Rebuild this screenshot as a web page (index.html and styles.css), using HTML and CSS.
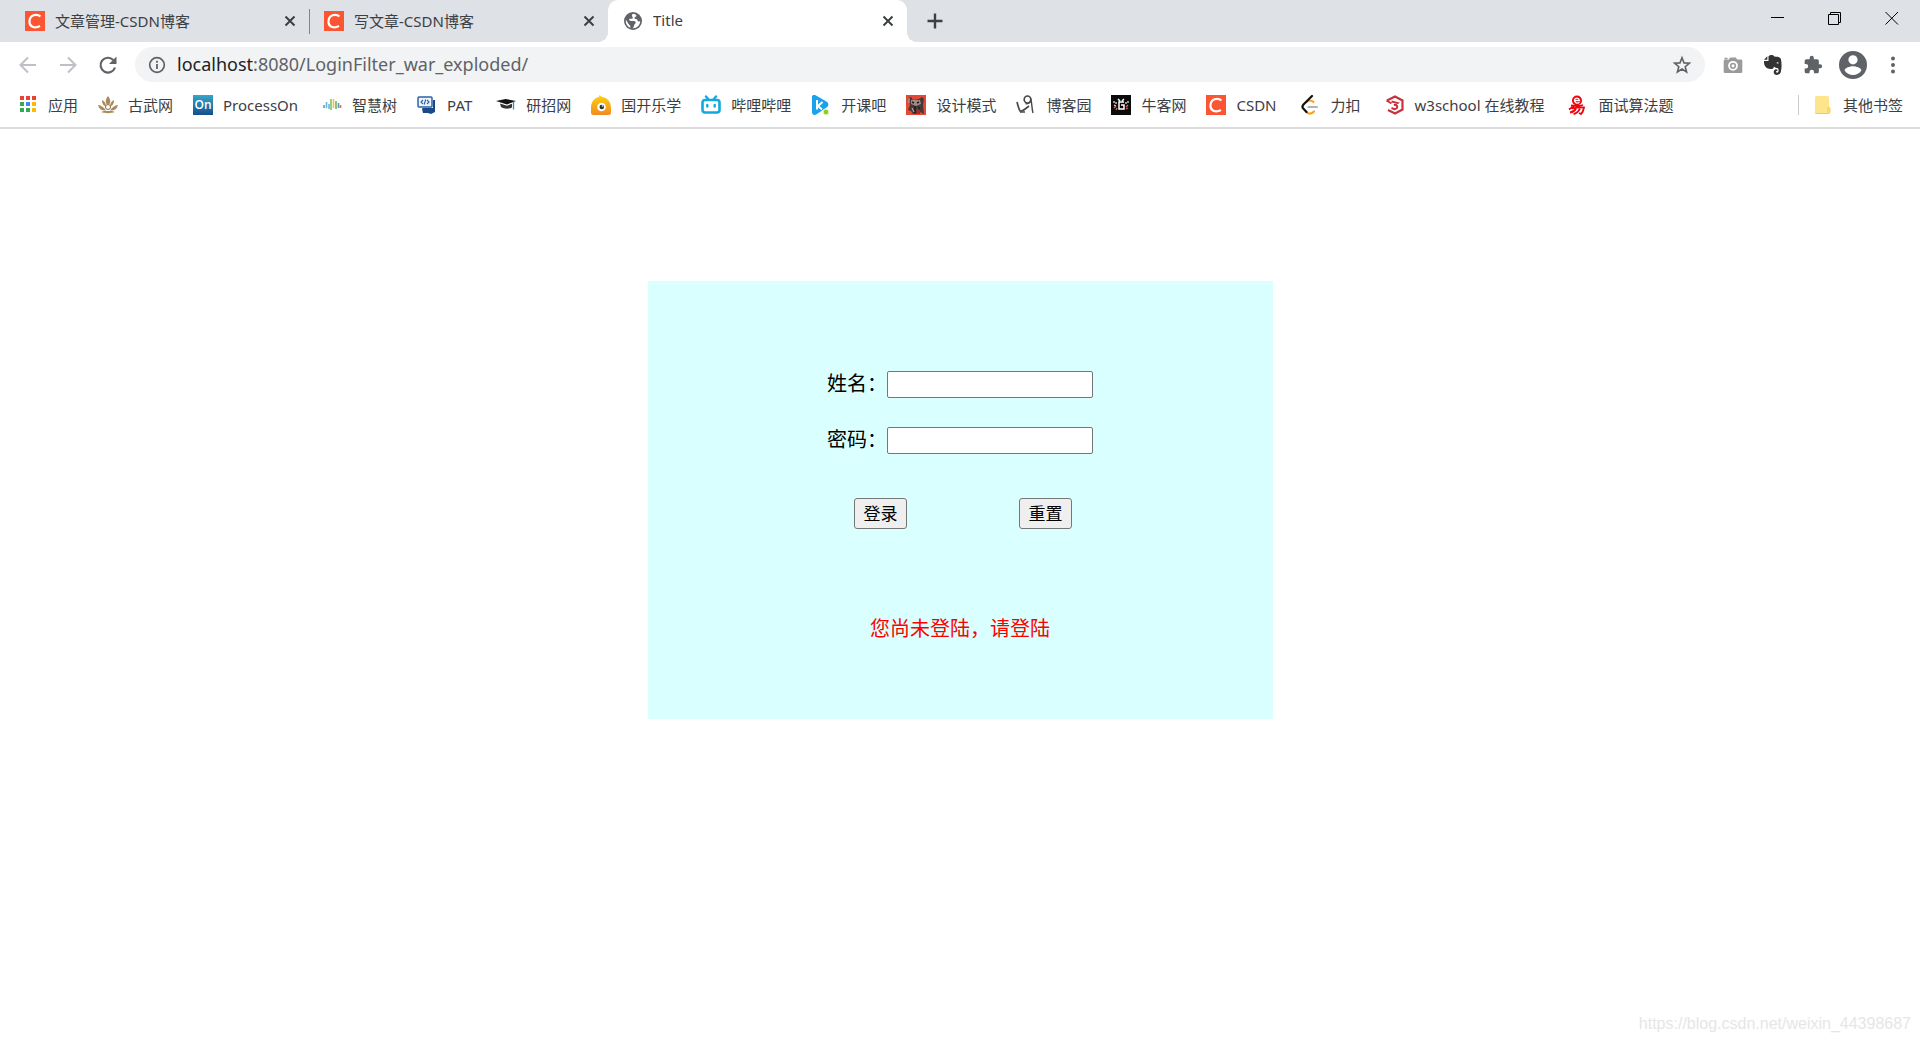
FILE: index.html
```html
<!DOCTYPE html>
<html lang="zh-CN">
<head>
<meta charset="utf-8">
<title>Title</title>
<link rel="stylesheet" href="styles.css">
</head>
<body>
<header class="browser">
  <div class="tab-strip">
    <div class="tab divided">
      <svg class="icon" viewBox="0 0 20 20"><rect width="20" height="20" fill="#fc5531"/><path d="M15.500 5.300C11 2 5 4.500 4.500 10S9.500 18 15 15" fill="none" stroke="#fff" stroke-width="2.200"/></svg>
      <span class="tab-title">文章管理-CSDN博客</span>
      <button class="tab-close" aria-label="关闭"><svg class="icon" viewBox="0 0 20 20"><path d="M5.500 5.500l9 9M14.500 5.500l-9 9" stroke="#3c4043" stroke-width="2"/></svg></button>
    </div>
    <div class="tab">
      <svg class="icon" viewBox="0 0 20 20"><rect width="20" height="20" fill="#fc5531"/><path d="M15.500 5.300C11 2 5 4.500 4.500 10S9.500 18 15 15" fill="none" stroke="#fff" stroke-width="2.200"/></svg>
      <span class="tab-title">写文章-CSDN博客</span>
      <button class="tab-close" aria-label="关闭"><svg class="icon" viewBox="0 0 20 20"><path d="M5.500 5.500l9 9M14.500 5.500l-9 9" stroke="#3c4043" stroke-width="2"/></svg></button>
    </div>
    <div class="tab active">
      <svg class="icon" viewBox="0 0 20 20"><circle cx="10" cy="10" r="9" fill="#5f6368"/><path d="M10.500 2.800c-2.500.7-1.500 2.400-1 3.200 1 1.400-.6 1.700-2.300 1.800-1.700.2-1.300 1.700-.2 2 1.700.5 5-.7 5.600 1.200.6 1.700-1.200 1.600-1.500 3.400-.2 1.200-.8 2.200-1.600 2.900 4.500.3 7.700-3.200 7.700-7.200-1 .7-2.600.3-2.800-1.200-.2-1.400-2.700-.4-2.900-2-.1-1.300 2-.9 2-2.500-.8-.8-2-1.400-3-1.600zM2.900 8.700c-.7 3.400 1.400 6.800 4.400 8 .3-1.600-.2-2.300-1.300-3.300-1.400-1.400-1-2-3.100-4.700z" fill="#fff"/></svg>
      <span class="tab-title">Title</span>
      <button class="tab-close" aria-label="关闭"><svg class="icon" viewBox="0 0 20 20"><path d="M5.500 5.500l9 9M14.500 5.500l-9 9" stroke="#3c4043" stroke-width="2"/></svg></button>
    </div>
    <button class="new-tab" aria-label="新标签页"><svg class="icon" viewBox="0 0 20 20"><path d="M10 2.500v15M2.500 10h15" stroke="#3c4043" stroke-width="2.400"/></svg></button>
    <div class="window-controls">
      <button aria-label="最小化"><svg viewBox="0 0 14 14"><path d="M0 6.500h13" stroke="#000"/></svg></button>
      <button aria-label="还原"><svg viewBox="0 0 14 14"><path d="M.5 3.500h10v10H.500zM2.500 3.500v-2h10v10h-2" fill="none" stroke="#000"/></svg></button>
      <button aria-label="关闭"><svg viewBox="0 0 14 14"><path d="M.5 1l12.500 12.500M13 1L.5 13.500" stroke="#000"/></svg></button>
    </div>
  </div>

  <div class="toolbar">
    <div class="nav">
      <button aria-label="后退"><svg class="icon" viewBox="0 0 20 20"><path d="M18 10H3M10 2.500L2.500 10l7.500 7.500" fill="none" stroke="#bdc0c4" stroke-width="2"/></svg></button>
      <button aria-label="前进"><svg class="icon" viewBox="0 0 20 20"><path d="M2 10h15M10 2.500l7.500 7.500-7.500 7.500" fill="none" stroke="#bdc0c4" stroke-width="2"/></svg></button>
      <button aria-label="刷新"><svg class="icon" viewBox="0 0 20 20"><path d="M17 12.500A7.400 7.400 0 1 1 15.300 5" fill="none" stroke="#5f6368" stroke-width="2.200"/><path d="M18.500 1.500v7.500H11z" fill="#5f6368"/></svg></button>
    </div>
    <div class="omnibox">
      <svg class="icon" viewBox="0 0 20 20"><circle cx="10" cy="10" r="7.300" fill="none" stroke="#5f6368" stroke-width="1.700"/><path d="M10 9v5M10 5.800v2" stroke="#5f6368" stroke-width="1.800"/></svg>
      <span class="url"><b>localhost</b>:8080/LoginFilter_war_exploded/</span>
      <button aria-label="收藏"><svg class="icon" viewBox="0 0 20 20"><path d="M10 2.800l2 5.100 5.400.3-4.200 3.500 1.400 5.300-4.600-3-4.600 3 1.400-5.300L2.600 8.200 8 7.900z" fill="none" stroke="#5f6368" stroke-width="1.600"/></svg></button>
    </div>
    <div class="extensions">
      <button aria-label="截图"><svg class="icon" viewBox="0 0 20 20"><path d="M2 4.500h4l1-2h6l1 2h4a1.300 1.300 0 0 1 1.300 1.300v11A1.300 1.300 0 0 1 18 18H2a1.300 1.300 0 0 1-1.300-1.200v-11A1.300 1.300 0 0 1 2 4.500z" fill="#9b9b9b"/><path d="M1.500 3.500h3" stroke="#9b9b9b" stroke-width="1.500"/><circle cx="10" cy="10.800" r="4" fill="none" stroke="#fff" stroke-width="1.800"/><circle cx="10" cy="10.800" r="1.600" fill="#fff"/></svg></button>
      <button aria-label="印象笔记"><svg class="icon" viewBox="0 0 20 20"><path d="M1 6h4.500V1.300C7-.3 10-.3 11.300 1.500c4 .2 6.300.7 6.700 3 .7 4 .9 8-.2 12.500-.7 3-4.500 3.600-6.200 2.300-1.600-1.400-1-4.800 1.400-5 1.200-.1 1.500.7 1.500 1.700-2-.2-2 1.600-.5 1.700 2 .1 2-3.700.8-4.500-1.300-.4-3-.5-3.800-1.700-.4 2.300-2.200 3-4.700 2.300C2.300 12.900.8 10 1 6z" fill="#333"/><path d="M1 4.700L4.300 1.300v3.400z" fill="#333"/><path d="M13.300 8.200c.8-1.300 2.200-1.100 2.400.3z" fill="#fff"/></svg></button>
      <button aria-label="扩展程序"><svg class="icon" viewBox="0 0 24 24"><path fill="#5f6368" d="M20.500 11H19V7a2 2 0 0 0-2-2h-4V3.500a2.500 2.500 0 0 0-5 0V5H4a2 2 0 0 0-2 2v3.800h1.500a2.700 2.700 0 0 1 0 5.400H2V20a2 2 0 0 0 2 2h3.800v-1.500a2.700 2.700 0 0 1 5.400 0V22H17a2 2 0 0 0 2-2v-4h1.500a2.500 2.500 0 0 0 0-5z"/></svg></button>
      <button aria-label="用户"><svg class="avatar" viewBox="2 2 20 20"><path fill="#5f6368" d="M12 2a10 10 0 1 0 0 20 10 10 0 0 0 0-20zm0 3a3.300 3.300 0 1 1 0 6.600A3.300 3.300 0 0 1 12 5zm0 14.200a7.200 7.200 0 0 1-6-3.200c0-2 4-3.100 6-3.100s6 1.100 6 3.100a7.200 7.200 0 0 1-6 3.200z"/></svg></button>
      <button aria-label="菜单"><svg class="icon" viewBox="0 0 20 20" fill="#5f6368"><circle cx="10" cy="3.500" r="2"/><circle cx="10" cy="10" r="2"/><circle cx="10" cy="16.500" r="2"/></svg></button>
    </div>
  </div>

  <nav class="bookmarks">
    <a href="#"><svg class="icon" viewBox="0 0 20 20"><path fill="#ea4335" d="M2 1h4v4H2zM8 1h4v4H8zM14 1h4v4h-4z"/><path fill="#34a853" d="M2 7h4v4H2zM2 13h4v4H2zM8 13h4v4H8z"/><path fill="#4285f4" d="M8 7h4v4H8z"/><path fill="#fbbc05" d="M14 7h4v4h-4zM14 13h4v4h-4z"/></svg>应用</a>
    <a href="#"><svg class="icon" viewBox="0 0 20 20"><path d="M10 1C7.500 4 7 7 8.500 9h3C13 7 12.500 4 10 1zM4 5c0 4 1.500 6 4 6.500C8 8.500 6.500 6 4 5zM16 5c0 4-1.500 6-4 6.500 0-3 1.500-5.500 4-6.500zM0 10c1 4 4 6 8 5.500C6 12 3 10.500 0 10zM20 10c-1 4-4 6-8 5.500 2-3.500 5-5 8-5.500zM3 17c4 1.500 10 1.500 14 0l-3-1H6z" fill="#a98a58"/><circle cx="10" cy="12" r="2.500" fill="#fff" stroke="#8c6c3d"/></svg>古武网</a>
    <a href="#" class="roomy"><svg class="icon" viewBox="0 0 20 20"><defs><linearGradient id="on" x2="0" y2="1"><stop stop-color="#35a6c8"/><stop offset="1" stop-color="#164f8b"/></linearGradient></defs><rect width="20" height="20" fill="url(#on)"/><text x="10" y="14" text-anchor="middle" class="glyph on-mark">On</text></svg>ProcessOn</a>
    <a href="#"><svg class="icon" viewBox="0 0 20 20" fill="none" stroke-width="1.600"><path d="M2 10v3" stroke="#5b93d6"/><path d="M4.500 7v6M7 9v5" stroke="#67b7e1"/><path d="M9 4v11" stroke="#7fc45a"/><path d="M11.500 4v9" stroke="#f0c04d"/><path d="M14 6v8" stroke="#65ba68"/><path d="M16.500 8v5" stroke="#5b93d6"/><path d="M18.500 10v3" stroke="#e86a5c"/></svg>智慧树</a>
    <a href="#" class="roomy"><svg class="icon" viewBox="0 0 20 20"><path d="M5 13h11V5h2v12l-3-1H7z" fill="#174a86"/><rect x="1" y="2" width="14" height="10" rx="1" fill="#eef4fc" stroke="#2b62a6" stroke-width="1.500"/><path d="M6 5L4 7l2 2M10 5l2 2-2 2M8.700 4.500l-1.500 5" fill="none" stroke="#2b62a6" stroke-width="1.100"/><path d="M5 14h13v3l-4 2-3-1H6z" fill="#174a86"/></svg>PAT</a>
    <a href="#"><svg class="icon" viewBox="0 0 20 20"><path d="M0 6l9.500-2L20 6l-9 3.500z" fill="#111"/><path d="M4 8.500l7 2.200 5-2v3.800c-3 1.700-8 1.500-11-.5z" fill="#333"/><path d="M17.500 6.500v8" stroke="#3b82c9" stroke-width="1.300"/></svg>研招网</a>
    <a href="#"><svg class="icon" viewBox="0 0 20 20"><defs><linearGradient id="gk" x2="0" y2="1"><stop stop-color="#fcd20c"/><stop offset="1" stop-color="#f18b22"/></linearGradient></defs><path d="M8.500 0l2.500 2c5 .3 9 5 9 11v4.500A2.500 2.500 0 0 1 17.500 20h-15A2.500 2.500 0 0 1 0 17.500V13C0 7.500 3 3 8 2z" fill="url(#gk)"/><circle cx="10.500" cy="12" r="4.300" fill="#fff"/><circle cx="10.800" cy="12" r="2.300" fill="#333"/><circle cx="11.500" cy="11" r=".8" fill="#fff"/></svg>国开乐学</a>
    <a href="#"><svg class="icon" viewBox="0 0 20 20" fill="none" stroke="#13a9df" stroke-linecap="round"><rect x="1.500" y="5" width="17" height="12.500" rx="2.500" stroke-width="2.600"/><path d="M5 1.500l2.500 3M15 1.500l-2.500 3" stroke-width="2.400"/><path d="M6.300 10v1.500M13.700 10v1.500" stroke-width="2.400"/></svg>哔哩哔哩</a>
    <a href="#"><svg class="icon" viewBox="0 0 20 20"><path d="M1 2c0-2 2-2.500 4-1.500l10.500 6c2.500 1.500 2.500 4.500 0 6L6 19c-3 2-5 .5-5-2z" fill="#18a3ec"/><path d="M6 5v9.500M11.500 7L7 11l4 3.500" fill="none" stroke="#fff" stroke-width="2"/><circle cx="15" cy="17" r="2.900" fill="#8fce24" stroke="#fff" stroke-width=".7"/></svg>开课吧</a>
    <a href="#"><svg class="icon" viewBox="0 0 20 20"><rect width="20" height="20" fill="#e34a35"/><path d="M2 3l3-1 2 3 6-1 3-2 2 2-1 6 1 9-4-2-2 2H7l-2-3-3-1 2-5z" fill="#48383a"/><path d="M5 5h9l1 4-5 2-5-2z" fill="#9c8d87"/><path d="M6 7l2 1M13 7l-2 1M9 11v7M13 12v5" stroke="#211b1e" stroke-width="1.500"/><path d="M3 3v5M6 13l2 4" stroke="#c9beb6"/><path d="M11 13l3 2v4h-4z" fill="#a82928"/></svg>设计模式</a>
    <a href="#"><svg class="icon" viewBox="0 0 20 20" fill="none" stroke="#4b4b4b"><path d="M1 7c1 4 2 8 3.500 9.500C7 16 10 13.500 13 11" stroke-width="1.700"/><ellipse cx="11.500" cy="4.500" rx="3.300" ry="3.500" stroke-width="1.700"/><path d="M14.500 3c1.500 4 1 9 2.500 15M9.500 8.500c2 .5 4-.5 5-2M4 17h5" stroke-width="1.400"/></svg>博客园</a>
    <a href="#"><svg class="icon" viewBox="0 0 20 20"><rect width="20" height="20" fill="#0b0b0b"/><path d="M13 7H8v7h5v-4h-3M7 4l2 2M13 4l-2 2" fill="none" stroke="#fff" stroke-width="1.500"/><path d="M3 6v2M5 7v2M17 6v2M15 7v2M3 10l2 1" stroke="#eee" stroke-width="1.200"/><path d="M3 13l2-2M5 15l1-2M17 10l-2 2M17 13l-2 1" stroke="#e9644c" stroke-width="1.300"/></svg>牛客网</a>
    <a href="#" class="roomy"><svg class="icon" viewBox="0 0 20 20"><rect width="20" height="20" fill="#fc5531"/><path d="M15.500 5.300C11 2 5 4.500 4.500 10S9.500 18 15 15" fill="none" stroke="#fff" stroke-width="2.200"/></svg>CSDN</a>
    <a href="#" class="roomy"><svg class="icon" viewBox="0 0 20 20" fill="none" stroke-width="2.200" stroke-linecap="round"><path d="M5.500 7c2-2 5-2 7 0M5.500 17c2 2.300 5 2.300 7.500-.5" stroke="#ffa116"/><path d="M11 1L2.500 9.500c-1.300 1.400-1.300 3 0 4.300l3 3.200" stroke="#111"/><path d="M7.500 12H16" stroke="#b3b3b3"/></svg>力扣</a>
    <a href="#" class="roomy"><svg class="icon" viewBox="0 0 20 20" fill="none" stroke="#c8323d"><path d="M2 5.500l8-4 7.500 4v9L10 18.500l-7-3.500" stroke-width="2.200"/><path d="M1.500 5.500l5 3" stroke-width="2"/><path d="M6.500 6.500l6 1.500-3.500 2c4-.5 4.500 3.500.5 4.200L6.500 13" stroke-width="1.900"/></svg>w3school 在线教程</a>
    <a href="#"><svg class="icon" viewBox="0 0 20 20" fill="none" stroke="#f5000b"><circle cx="9" cy="5.500" r="5" fill="#f5000b" stroke="none"/><path d="M6.500 5.500h5C11 2.500 7 2.500 6.500 5c-.3 3 3 3.800 5 2.300" stroke="#fff" stroke-width="1.300"/><path d="M3 10.500c4 .7 8 .7 12-.5M6 11l-5 3.500M4 13.500c4-1 8-1.500 12-1-.500 3-1.500 5-3 6.500l-2-1M8 13.500c-1 2-3 3.500-6 4M12 13.500c-1.500 3-4 5-6.500 5.500" stroke-width="1.800"/></svg>面试算法题</a>
    <a href="#" class="other"><svg class="icon" viewBox="0 0 20 20"><path d="M2 2.500A1.500 1.500 0 0 1 3.500 1h11A1.500 1.500 0 0 1 16 2.500V13l1 1v4l-1 1H3.500A1.500 1.500 0 0 1 2 17.500z" fill="#fee48a"/><path d="M2.500 18.500H16l1-1v-4.500l-2-.5v5" fill="none" stroke="#f1cc58"/></svg>其他书签</a>
  </nav>
</header>

<main class="page">
  <form class="login" onsubmit="return false">
    <div class="field"><label for="name">姓名：</label><input id="name" type="text"></div>
    <div class="field"><label for="password">密码：</label><input id="password" type="password"></div>
    <div class="actions"><button type="submit">登录</button><button type="reset">重置</button></div>
    <p class="message">您尚未登陆，请登陆</p>
  </form>
</main>
<footer class="watermark">https://blog.csdn.net/weixin_44398687</footer>
</body>
</html>
```
FILE: styles.css
```css
* {
  box-sizing: border-box;
}

body {
  margin: 0;
  min-height: 100vh;
  display: flex;
  flex-direction: column;
  background: #fff;
  color: #000;
  font-family: "Noto Sans", "Noto Sans CJK SC", sans-serif;
}

.browser {
  color: #3c4043;
  font-size: 15px;
  border-bottom: 2px solid #dadce0;
}

.browser button {
  display: flex;
  align-items: center;
  justify-content: center;
  flex: none;
  padding: 0;
  border: 0;
  background: none;
}

.icon {
  display: block;
  flex: none;
  width: 20px;
  height: 20px;
}

.glyph {
  fill: #fff;
  font-family: "Open Sans", sans-serif;
  font-weight: 600;
}

.on-mark {
  font-size: 12px;
}

/* tab strip */
.tab-strip {
  display: flex;
  height: 42px;
  padding-left: 10px;
  background: #dee1e6;
}

.tab {
  position: relative;
  display: flex;
  align-items: center;
  gap: 10px;
  flex: 0 1 299px;
  min-width: 0;
  padding: 0 9px 0 15px;
}

.tab-title {
  flex: 1;
  padding-bottom: 2px;
  overflow: hidden;
  white-space: nowrap;
}

.tab-close {
  width: 20px;
  height: 20px;
}

.tab.divided::after {
  content: "";
  position: absolute;
  right: -1px;
  top: 9px;
  bottom: 8px;
  width: 1px;
  background: #80868b;
}

.tab.active {
  background: #fff;
  border-radius: 10px 10px 0 0;
}

.tab.active::before,
.tab.active::after {
  content: "";
  position: absolute;
  bottom: 0;
  width: 10px;
  height: 10px;
}

.tab.active::before {
  right: 100%;
  background: radial-gradient(circle at 0 0, #dee1e6 10px, #fff 10px);
}

.tab.active::after {
  left: 100%;
  background: radial-gradient(circle at 100% 0, #dee1e6 10px, #fff 10px);
}

.new-tab {
  width: 56px;
}

.window-controls {
  display: flex;
  height: 36px;
  margin-left: auto;
}

.window-controls button {
  width: 57px;
}

.window-controls svg {
  width: 14px;
  height: 14px;
}

/* toolbar */
.toolbar {
  display: flex;
  align-items: center;
  height: 45px;
  padding: 0 7px 0 8px;
}

.nav,
.extensions {
  display: flex;
  flex: none;
}

.nav button,
.extensions button {
  width: 40px;
  height: 36px;
}

.nav {
  margin-right: 7px;
}

.extensions {
  margin-left: 8px;
}

.avatar {
  width: 28px;
  height: 28px;
}

.omnibox {
  display: flex;
  align-items: center;
  flex: 1;
  min-width: 0;
  height: 35px;
  padding: 0 13px 0 12px;
  gap: 10px;
  border-radius: 18px;
  background: #f1f3f4;
}

.url {
  flex: 1;
  padding-bottom: 2px;
  overflow: hidden;
  white-space: nowrap;
  color: #5f6368;
  font-size: 18px;
}

.url b {
  color: #202124;
  font-weight: 400;
}

/* bookmarks bar */
.bookmarks {
  display: flex;
  align-items: center;
  gap: 20px;
  height: 40px;
  padding: 0 17px 4px 18px;
}

.bookmarks a {
  display: flex;
  align-items: center;
  gap: 10px;
  flex: none;
  line-height: 20px;
  color: inherit;
  text-decoration: none;
}

.bookmarks .roomy {
  padding-right: 4px;
}

.bookmarks .other {
  margin-left: auto;
  padding-left: 14px;
  border-left: 1px solid #c8cacd;
}

/* login page */
.page {
  flex: 1;
  padding: 152px 20px 40px;
}

.login {
  max-width: 625px;
  margin: 0 auto;
  padding: 90px 20px 75px;
  background: #d9ffff;
  font-size: 20px;
  line-height: 25px;
}

.field,
.actions {
  display: flex;
  justify-content: center;
}

.field {
  margin-bottom: 29px;
}

.field input {
  width: 206px;
  height: 27px;
  padding: 1px 3px;
  border: 1px solid #767676;
  border-radius: 2px;
  background: #fff;
  font-size: 17px;
}

.actions {
  gap: 112px;
  padding: 15px 0 0 6px;
}

.actions button {
  width: 53px;
  height: 31px;
  padding: 0;
  border: 1px solid #767676;
  border-radius: 3px;
  background: #efefef;
  color: #000;
  font: 17px/24px "Noto Sans", "Noto Sans CJK SC", sans-serif;
}

.message {
  margin: 85px 0 0;
  line-height: 30px;
  color: #f00;
  text-align: center;
}

.watermark {
  padding: 0 9px 8px;
  color: #e6e6e6;
  font: 16px/20px "Liberation Sans", Arial, sans-serif;
  text-align: right;
}
```
